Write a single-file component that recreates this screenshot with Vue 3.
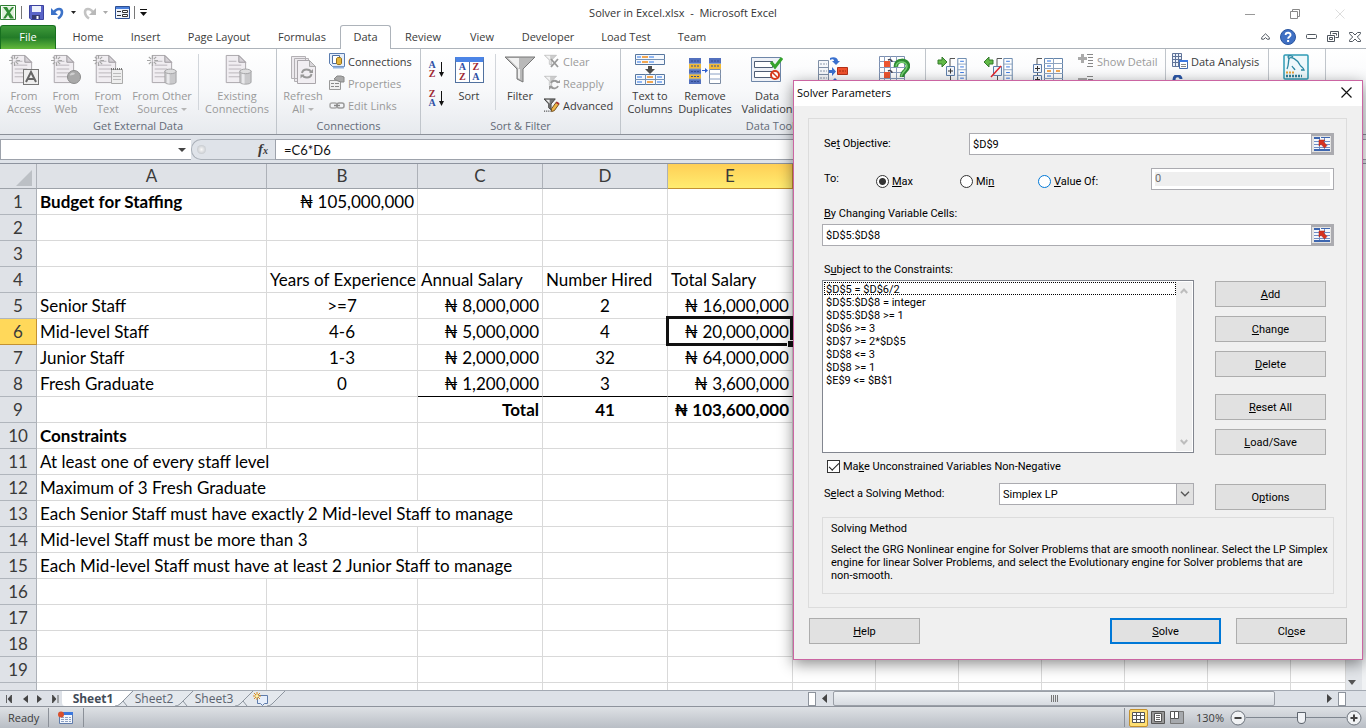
<script setup>
import { ref } from 'vue'

const tabs = [
  { name: 'Home', cls: 'w58' },
  { name: 'Insert', cls: 'w57' },
  { name: 'Page Layout', cls: 'w90' },
  { name: 'Formulas', cls: 'w76' },
  { name: 'Data', cls: 'active' },
  { name: 'Review', cls: 'w64' },
  { name: 'View', cls: 'w54' },
  { name: 'Developer', cls: 'w78' },
  { name: 'Load Test', cls: 'w78' },
  { name: 'Team', cls: 'w54' },
]

const columns = ['A', 'B', 'C', 'D', 'E', '', '', '', '', '', '', '']

const N = '₦'
const content = {
  1: [{ t: 'Budget for Staffing', c: 'bold' }, { t: `${N} 105,000,000`, c: 'right' }],
  4: [{}, { t: 'Years of Experience' }, { t: 'Annual Salary' }, { t: 'Number Hired' }, { t: 'Total Salary' }],
  5: [{ t: 'Senior Staff' }, { t: '>=7', c: 'mid' }, { t: `${N} 8,000,000`, c: 'right' }, { t: '2', c: 'mid' }, { t: `${N} 16,000,000`, c: 'right' }],
  6: [{ t: 'Mid-level Staff' }, { t: '4-6', c: 'mid' }, { t: `${N} 5,000,000`, c: 'right' }, { t: '4', c: 'mid' }, { t: `${N} 20,000,000`, c: 'right selected' }],
  7: [{ t: 'Junior Staff' }, { t: '1-3', c: 'mid' }, { t: `${N} 2,000,000`, c: 'right' }, { t: '32', c: 'mid' }, { t: `${N} 64,000,000`, c: 'right' }],
  8: [{ t: 'Fresh Graduate' }, { t: '0', c: 'mid' }, { t: `${N} 1,200,000`, c: 'right rule' }, { t: '3', c: 'mid rule' }, { t: `${N} 3,600,000`, c: 'right rule' }],
  9: [{}, {}, { t: 'Total', c: 'right bold' }, { t: '41', c: 'mid bold' }, { t: `${N} 103,600,000`, c: 'right bold' }],
  10: [{ t: 'Constraints', c: 'bold' }],
  11: [{ t: 'At least one of every staff level', span: 2 }],
  12: [{ t: 'Maximum of 3 Fresh Graduate', span: 2 }],
  13: [{ t: 'Each Senior Staff must have exactly 2 Mid-level Staff to manage', span: 3 }],
  14: [{ t: 'Mid-level Staff must be more than 3', span: 2 }],
  15: [{ t: 'Each Mid-level Staff must have at least 2 Junior Staff to manage', span: 3 }],
}
const rows = Array.from({ length: 20 }, (_, i) => {
  const cells = [...(content[i + 1] || [])]
  let used = cells.reduce((n, c) => n + (c.span || 1), 0)
  while (used < columns.length) {
    cells.push({})
    used++
  }
  return { n: i + 1, cells }
})

const constraints = ['$D$5 = $D$6/2', '$D$5:$D$8 = integer', '$D$5:$D$8 >= 1', '$D$6 >= 3', '$D$7 >= 2*$D$5', '$D$8 <= 3', '$D$8 >= 1', '$E$9 <= $B$1']

const objective = ref('$D$9')
const variables = ref('$D$5:$D$8')
const target = ref('max')
const targetValue = ref('0')
const nonNegative = ref(true)
const formula = ref('=C6*D6')
</script>

<template>
  <div class="app">
    <svg class="defs" aria-hidden="true">
      <symbol id="doc" viewBox="0 0 32 32">
        <path d="M8.500 1.500h13l7 7v21h-20z" fill="#f0edf1" stroke="#aaa6ab" />
        <path d="M21.500 1.500v7h7z" fill="#d5d1d6" stroke="#9b979c" />
        <path d="M11 7.500h8M11 11.500h13M11 15.500h13M11 19.500h13M11 23.500h13" stroke="#b9b5ba" />
      </symbol>
      <symbol id="spark" viewBox="0 0 12 12">
        <path d="M6 0v4M6 8v4M0 6h4M8 6h4M2 2l2.500 2.500M7.500 7.500L10 10M10 2L7.500 4.500M4.500 7.500L2 10" stroke="#a5a5a5" stroke-width="1.300" />
      </symbol>
      <symbol id="cyl" viewBox="0 0 14 18">
        <path d="M1 3v12c0 3 12 3 12 0V3z" fill="#c9c9cb" stroke="#a0a0a2" />
        <path d="M3 5v11c1 .6 2 .8 3 .9V5z" fill="#e9e9eb" />
        <ellipse cx="7" cy="3.500" rx="6" ry="2.500" fill="#dededf" stroke="#a0a0a2" />
      </symbol>
      <symbol id="funnel" viewBox="0 0 32 32">
        <path d="M1 3h30L19 15v13l-6-3V15z" fill="#b9b9b9" stroke="#777" />
        <path d="M4 4h11v11z" fill="#f1f1f1" />
        <path d="M14 15h2v10l-2-1z" fill="#eee" />
      </symbol>
      <symbol id="refbtn" viewBox="0 0 16 14">
        <path d="M0 0h16v14H0z" fill="#f4f7fc" />
        <path d="M0 4.500h16M0 7.500h16M0 10.500h16M5.500 0v14M10.500 0v14" stroke="#6f8dc4" />
        <path d="M0 0h6v2H0zM7 0h9v1H7zM0 12h16v2H0z" fill="#3d66b0" />
        <path d="M5 3h6L9.500 4.800l3.500 3.700-2.500 2.500L7 7.300 5 9z" fill="#d8321f" stroke="#a9261a" stroke-width=".5" />
      </symbol>
      <symbol id="rows" viewBox="0 0 10 32">
        <path d="M.5.500h9v31h-9z" fill="#fff" stroke="#6484ab" />
        <path d="M0 6.500h10M0 12.500h10M0 18.500h10M0 24.500h10" stroke="#8ea4c0" />
        <path d="M3 3.500h4M3 9.500h4M3 15.500h4M3 21.500h4M3 28h4" stroke="#2f72e0" />
      </symbol>
    </svg>

    <header class="titlebar">
      <div class="quick">
        <svg width="17" height="17" viewBox="0 0 17 17"><path d="M.5 1.500h15v14H.5z" fill="#fff" stroke="#2f7d34" /><path d="M2 2.500h12v12H2z" fill="#dff0dc" /><path d="M3 3h4l2 3.500L12 3h2l-4 5.500 4 6h-4l-2-3.500-2.500 3.500H3l4-6z" fill="#318c35" /></svg>
        <span class="bar"></span>
        <button class="plain" aria-label="Save"><svg width="15" height="15" viewBox="0 0 15 15"><path d="M.5.500h14v14H2l-1.500-1.500z" fill="#5964c8" stroke="#3c429e" /><path d="M3 1h9v6H3z" fill="#edf1fb" /><path d="M3 10h8v4H3z" fill="#353b72" /><path d="M7.500 11h2v3h-2z" fill="#fff" /></svg></button>
        <button class="plain" aria-label="Undo"><svg width="13" height="14" viewBox="0 0 13 14"><path d="M3 6c3-4 8-4 8 0 0 3-1.500 5-4 6.500" fill="none" stroke="#3c72c8" stroke-width="2.600" /><path d="M0 2v7h7z" fill="#3c72c8" /></svg></button>
        <svg class="caret" width="5" height="3" viewBox="0 0 5 3"><path d="M0 0h5L2.500 3z" fill="#222" /></svg>
        <button class="plain" aria-label="Redo"><svg width="13" height="14" viewBox="0 0 13 14"><path d="M10 6c-3-4-8-4-8 0 0 3 1.500 5 4 6.500" fill="none" stroke="#c3c3c3" stroke-width="2.600" /><path d="M13 2v7H6z" fill="#b9b9b9" /></svg></button>
        <svg class="caret" width="5" height="3" viewBox="0 0 5 3"><path d="M0 0h5L2.500 3z" fill="#aaa" /></svg>
        <button class="plain" aria-label="Form"><svg width="15" height="13" viewBox="0 0 15 13"><path d="M.5.500h14v12H.5z" fill="#eef3fb" stroke="#2d4f91" /><path d="M1 1h13v2H1z" fill="#4a7fdc" /><path d="M2 5.500h4M2 9.500h4" stroke="#333" /><path d="M7.500 4.500h5v2h-5zM7.500 8.500h5v2h-5z" fill="#fff" stroke="#333" /></svg></button>
        <span class="bar"></span>
        <svg width="7" height="7" viewBox="0 0 7 7"><path d="M0 .5h7" stroke="#111" /><path d="M0 3h7L3.500 7z" fill="#111" /></svg>
      </div>
      <h1>Solver in Excel.xlsx&nbsp; -&nbsp; Microsoft Excel</h1>
      <div class="winbtns">
        <button class="plain" aria-label="Minimize"><svg width="11" height="11" viewBox="0 0 11 11"><path d="M0 5.500h10" stroke="#999" /></svg></button>
        <button class="plain" aria-label="Restore"><svg width="11" height="11" viewBox="0 0 11 11"><path d="M.5 2.500h7v7h-7zM2.500 2.500v-2h7v7h-2" fill="none" stroke="#888" /></svg></button>
        <button class="plain" aria-label="Close window"><svg width="11" height="11" viewBox="0 0 11 11"><path d="M.5.500l9 9M9.500.5l-9 9" stroke="#ddd" /></svg></button>
      </div>
    </header>

    <nav class="tabs">
      <button class="file">File</button>
      <button v-for="t in tabs" :key="t.name" class="tab" :class="t.cls">{{ t.name }}</button>
      <div class="helpers">
        <svg width="9" height="7" viewBox="0 0 9 7"><path d="M.7 4.500L4.500.8l3.800 3.700v1.700H6.200L4.500 4.600 2.800 6.200H.7z" fill="#fff" stroke="#4f565f" /></svg>
        <svg width="16" height="16" viewBox="0 0 16 16"><circle cx="8" cy="8" r="7.500" fill="#3f70c4" stroke="#2a559f" /><path d="M5.600 6c0-3 5-3 5 0 0 1.800-2.500 1.800-2.500 3.800" fill="none" stroke="#fff" stroke-width="1.800" /><path d="M7.100 11h2v2h-2z" fill="#fff" /></svg>
        <svg width="11" height="5" viewBox="0 0 11 5"><rect x=".5" y=".5" width="10" height="4" rx="1" fill="#fff" stroke="#4f565f" /></svg>
        <svg width="12" height="11" viewBox="0 0 12 11"><path d="M3.500 3.500v-3h8v6h-3" fill="none" stroke="#4f565f" /><path d="M.5 4.500h7v6h-7z M2.500 6.500h3v2h-3zM5.500 2.500h4v2" fill="none" stroke="#4f565f" /></svg>
        <svg width="12" height="10" viewBox="0 0 12 10"><path d="M.5.500h3L6 3 8.500.5h3v1.200L8.300 5l3.200 3.200v1.300h-3L6 7 3.500 9.500h-3V8.200L3.700 5 .5 1.700z" fill="#fff" stroke="#4f565f" /></svg>
      </div>
    </nav>

    <section class="ribbon">
      <div class="group g-ext">
        <div class="tools">
          <button class="big b42 off"><svg width="32" height="32" viewBox="0 0 32 32"><use href="#doc" x="-4" y="0" width="31" height="31" /><use href="#spark" x="1" y="1" width="11" height="11" /><rect x="15.500" y="15.500" width="15" height="15" fill="#eee" stroke="#777" /><path d="M18 28l5-10 5 10M20 25h6" fill="none" stroke="#666" stroke-width="2" /></svg>From<br>Access</button>
          <button class="big b42 off"><svg width="32" height="32" viewBox="0 0 32 32"><use href="#doc" x="-4" y="0" width="31" height="31" /><use href="#spark" x="1" y="1" width="11" height="11" /><circle cx="24" cy="23" r="6.500" fill="#a9a9a9" stroke="#8c8c8c" /><path d="M19.500 21c1.500-3 4-3 5-2s-1 2-2 2-2 1-3 0z" fill="#cfcfcf" /></svg>From<br>Web</button>
          <button class="big b42 off"><svg width="32" height="32" viewBox="0 0 32 32"><use href="#doc" x="-4" y="0" width="31" height="31" /><use href="#spark" x="1" y="1" width="11" height="11" /><path d="M19.500 15.500h11v14h-11z" fill="#eee" stroke="#aaa" /><path d="M19 15h12" stroke="#777" stroke-width="2" stroke-dasharray="1 1" /><path d="M21 19.500h8M21 22.500h8M21 25.500h8" stroke="#bbb" /></svg>From<br>Text</button>
          <button class="big b66 off"><svg width="32" height="32" viewBox="0 0 32 32"><use href="#doc" x="-2" y="0" width="31" height="31" /><use href="#spark" x="1" y="1" width="11" height="11" /><use href="#cyl" x="18" y="14" width="13" height="17" /></svg>From Other<br>Sources <i class="dd"></i></button>
          <span class="sep"></span>
          <button class="big b70 off"><svg width="32" height="32" viewBox="0 0 32 32"><use href="#doc" x="-3" y="0" width="31" height="31" /><use href="#cyl" x="18" y="14" width="13" height="17" /></svg>Existing<br>Connections</button>
        </div>
        <div class="caption">Get External Data</div>
      </div>

      <div class="group g-con">
        <div class="tools">
          <button class="big b46 off"><svg width="32" height="32" viewBox="0 0 32 32"><path d="M4.500 2.500h14v22h-14zM7.500 4.500h14v23h-14z" fill="#ece9ed" stroke="#b3b0b4" /><path d="M10.500 6.500h12l6 6v17h-18z" fill="#f1eef2" stroke="#aaa6ab" /><path d="M22.500 6.500v6h6z" fill="#d9d6da" stroke="#aaa" /><path d="M15 19c1-5 8-4 9-1M24.500 20c-1 5-8 4-9 1" fill="none" stroke="#999" stroke-width="2" /><path d="M22 19h4v-4zM17.500 20.500h-4v4z" fill="#999" /></svg>Refresh<br>All <i class="dd"></i></button>
          <div class="smalls">
            <button class="small"><svg width="16" height="16" viewBox="0 0 16 16"><path d="M.5.500h15v13H3.500l-3-3z" fill="#e5eefb" stroke="#5a7caf" /><path d="M3.500 2.500h7v8h-7z" fill="#fff" stroke="#4d6ea2" /><path d="M7.500 5.500c0-1.500 5-1.500 5 0v5c0 1.500-5 1.500-5 0z" fill="#e5b53a" stroke="#94701e" /><path d="M4 14.500h11" stroke="#8fb1e0" stroke-width="2" /></svg>Connections</button>
            <button class="small off"><svg width="16" height="16" viewBox="0 0 16 16"><path d="M.5 5.500h11v9H.5z" fill="#efefef" stroke="#999" /><path d="M2 8.500h3M6 8.500h4M2 11.500h3M6 11.500h4" stroke="#888" /><path d="M5 4l3-3h4l3 1v5h-3L9 6z" fill="#aaa" stroke="#888" /></svg>Properties</button>
            <button class="small off"><svg width="16" height="16" viewBox="0 0 16 16"><rect x="1" y="6" width="7" height="5" rx="2" fill="none" stroke="#aaa" stroke-width="1.500" /><rect x="8" y="6" width="7" height="5" rx="2" fill="none" stroke="#999" stroke-width="1.500" /><path d="M5 8.500h6" stroke="#888" stroke-width="1.500" /></svg>Edit Links</button>
          </div>
        </div>
        <div class="caption">Connections</div>
      </div>

      <div class="group g-sort">
        <div class="tools">
          <div class="azcol">
            <button class="plain az" aria-label="Sort A to Z"><span class="letters"><b class="a">A</b><b class="z">Z</b></span><svg width="5" height="15" viewBox="0 0 5 15"><path d="M2.500 0v12" stroke="#111" /><path d="M0 10h5l-2.500 5z" fill="#111" /></svg></button>
            <button class="plain az" aria-label="Sort Z to A"><span class="letters"><b class="z">Z</b><b class="a">A</b></span><svg width="5" height="15" viewBox="0 0 5 15"><path d="M2.500 0v12" stroke="#111" /><path d="M0 10h5l-2.500 5z" fill="#111" /></svg></button>
          </div>
          <button class="big single b46"><span class="sorticon"><b class="a">A</b><b class="z">Z</b><b class="z">Z</b><b class="a">A</b></span>Sort</button>
          <span class="sep"></span>
          <button class="big single b42"><svg width="32" height="32" viewBox="0 0 32 32"><use href="#funnel" width="32" height="32" /></svg>Filter</button>
          <div class="smalls">
            <button class="small off"><svg width="16" height="16" viewBox="0 0 16 16"><use href="#funnel" x="0" y="1" width="13" height="13" opacity=".7" /><path d="M7 6l7 8M14 6l-7 8" stroke="#999" stroke-width="1.800" /></svg>Clear</button>
            <button class="small off"><svg width="16" height="16" viewBox="0 0 16 16"><use href="#funnel" x="0" y="0" width="13" height="13" opacity=".7" /><path d="M7 8c1-3 6-3 7 0M14 11c-1 3-5 3-7 1" fill="none" stroke="#999" stroke-width="1.800" /><path d="M12 8h4V5zM9 11H5v4z" fill="#999" /></svg>Reapply</button>
            <button class="small"><svg width="16" height="16" viewBox="0 0 17 16"><path d="M0 1.500h12L7.500 7v6l-2.500-2V7z" fill="#777" stroke="#444" /><path d="M2 2.500h4v4z" fill="#eee" /><path d="M8 12l5-7 3 2-5 7-3 1z" fill="#eeb447" stroke="#6b4a1c" /><path d="M13 5l3 2" stroke="#a33" stroke-width="2" /><path d="M0 14.500h8" stroke="#111" stroke-dasharray="1 1" /></svg>Advanced</button>
          </div>
        </div>
        <div class="caption">Sort &amp; Filter</div>
      </div>

      <div class="group g-data">
        <div class="tools">
          <button class="big b52"><svg width="32" height="32" viewBox="0 0 32 32"><path d="M1.500.5h29v10h-29zM1.500 20.500h29v10h-29z" fill="#f5f8fd" stroke="#57779f" /><path d="M1 5.500h30M1 25.500h30M11.500 20v11M21.500 20v11" stroke="#7592b4" /><path d="M3 3h4M15 3h5M3 8h4M15 8h5M3 23h5M23 23h5M3 28h5M23 28h5" stroke="#2d76e8" /><path d="M8 3h6M8 8h6M13 23h6M13 28h6" stroke="#f08b19" stroke-width="1.500" /><path d="M14 12h4v3h3l-5 5-5-5h3z" fill="#4d4d4d" /></svg>Text to<br>Columns</button>
          <button class="big b58"><svg width="34" height="32" viewBox="0 0 34 32"><path d="M1 4h12v26H1zM21 4h12v5H21z" fill="#5370bd" /><path d="M1 10h12v5H1zM1 20h12v5H1zM21 10h12v5H21z" fill="#f1ba35" /><path d="M21.500 15.500h11v14h-11z" fill="#fff" stroke="#7b8ba2" /><path d="M21 20h12M21 25h12M1 9.500h12M1 15h12M1 20h12M1 25h12M21 9.500h12" stroke="#8aa0c4" /><path d="M3 7h8M3 12h8M3 17.500h8M3 22.500h8M3 27.500h8M23 7h8M23 12h8" stroke="#334c93" stroke-dasharray="2 1" /><path d="M14 16.500h4" stroke="#2c5ed0" /><path d="M17 14v5l3-2.500z" fill="#2c5ed0" /></svg>Remove<br>Duplicates</button>
          <button class="big b66"><svg width="32" height="32" viewBox="0 0 32 32"><path d="M.5 3.500h29v24H.5z" fill="#eef1f7" stroke="#6e86a8" /><path d="M3.500 7.500h18v6h-18zM3.500 17.500h18v6h-18z" fill="#fff" stroke="#4f5d75" /><path d="M20 8l4 5 7-9" fill="none" stroke="#35a32d" stroke-width="3" /><circle cx="24" cy="21" r="4" fill="#fff" stroke="#d5381b" stroke-width="2" /><path d="M21 18l6 6" stroke="#d5381b" stroke-width="1.500" /></svg>Data<br>Validation</button>
          <button class="big bare b66" aria-label="Consolidate"><svg width="32" height="32" viewBox="0 0 32 32"><path d="M1.500 4.500h10v24h-10z" fill="#f5f7fa" stroke="#7f8fa6" /><path d="M1 11.500h11M1 18.500h11" stroke="#7f8fa6" /><path d="M3 8h7M3 15h7M3 22h7" stroke="#8d9aac" stroke-dasharray="2 1" /><path d="M20.500 11.500h10v7h-10z" fill="#f0512d" stroke="#b43118" /><path d="M22 15h7" stroke="#a6300f" stroke-dasharray="2 1" /><path d="M12 14h3v-3l4 4.500-4 4.500v-3h-3zM13 2c4-2 8 0 8 3h2l-4 4-4-4h2c0-2-2-2-4-1zM14 26l4-4 4 4z" fill="#3a70cf" /></svg></button>
          <button class="big bare b56" aria-label="What-If Analysis"><svg width="32" height="32" viewBox="0 0 32 32"><path d="M1.500.5h25v28h-25z" fill="#fff" stroke="#7c8fb0" /><path d="M1 5.500h26M1 11.500h26M1 16.500h26M1 22.500h26M6.500 0v29M12.500 0v29M18.500 0v29" stroke="#8a9dbd" /><path d="M6 5h6v6H6zM6 16h6v6H6z" fill="#ec5530" /><path d="M10 4c2-1 4 0 4 2M10 15c2-1 4 0 4 2" stroke="#445" stroke-width="1.500" fill="none" /><path d="M18 11c-1-8 12-8 12-1 0 5-6 5-6 11" fill="none" stroke="#2d8b32" stroke-width="4.500" /><path d="M18 10.500c0-6 11-6 11 0 0 4-5 5-6 10" fill="none" stroke="#75cf73" stroke-width="1.500" /><circle cx="23" cy="27" r="3" fill="#49a64a" /></svg></button>
        </div>
        <div class="caption">Data Tools</div>
      </div>

      <div class="group g-out">
        <div class="tools">
          <button class="big bare b46" aria-label="Group"><svg width="32" height="32" viewBox="0 0 32 32"><path d="M2 4h4V1l5 5-5 5V8H2z" fill="#62b947" stroke="#347a2c" /><path d="M19 2.500h-5V11M14.500 18v10" fill="none" stroke="#555" /><path d="M10.500 10.500h8v9h-8z" fill="#f3f6fb" stroke="#5f7fac" /><path d="M12 15h5M14.500 12.500v5" stroke="#333" /><use href="#rows" x="21" y="2" width="10" height="30" /></svg></button>
          <button class="big bare b46" aria-label="Ungroup"><svg width="32" height="32" viewBox="0 0 32 32"><path d="M11 4H7V1L2 6l5 5V8h4z" fill="#62b947" stroke="#347a2c" /><path d="M20 2.500h-5V11M15.500 18v10" fill="none" stroke="#555" /><path d="M11.500 10.500h8v9h-8z" fill="#f3f6fb" stroke="#5f7fac" /><path d="M9 21l10-11" stroke="#e5222a" stroke-width="1.500" /><use href="#rows" x="21" y="2" width="10" height="30" /></svg></button>
          <button class="big bare b54" aria-label="Subtotal"><svg width="32" height="32" viewBox="0 0 32 32"><path d="M10 2.500H5V8M5.500 16v14" fill="none" stroke="#555" /><path d="M1.500 8.500h8v8h-8zM1.500 19.500h8v8h-8z" fill="#f3f6fb" stroke="#5f7fac" /><path d="M3 12.500h5M5.500 10v5M3 23.500h5M5.500 21v5" stroke="#333" /><path d="M12.500 2.500h18v29h-18z" fill="#fff" stroke="#6484ab" /><path d="M12 7.500h19M12 12.500h19M12 17.500h19M12 22.500h19M21.500 2v30" stroke="#8ea4c0" /><path d="M15 5h4M15 10h4M15 20h4" stroke="#2f72e0" /><path d="M24 15h4M15 15h4M15 25h4M24 25h4" stroke="#f08b19" stroke-width="1.500" /></svg></button>
          <div class="smalls">
            <button class="small off"><svg width="16" height="16" viewBox="0 0 16 16"><path d="M3 1h3v3h3v3H6v3H3V7H0V4h3z" fill="#aaa" /><path d="M9 1.500h6M10 4.500h5M10 7.500h5M10 10.500h5M9 13.500h6" stroke="#888" /></svg>Show Detail</button>
            <button class="small off" aria-label="Hide Detail"><svg width="16" height="16" viewBox="0 0 16 16"><path d="M0 3h9v3H0z" fill="#aaa" /><path d="M9 1.500h6M10 4.500h5M10 7.500h5" stroke="#888" /></svg></button>
          </div>
        </div>
      </div>

      <div class="group g-ana">
        <div class="tools">
          <div class="smalls">
            <button class="small"><svg width="16" height="16" viewBox="0 0 16 16"><path d="M.5.500h9v13h-9z" fill="#edf2fa" stroke="#5f7399" /><path d="M0 3.500h10M0 6.500h10M0 9.500h10M3.500 0v14M6.500 0v14" stroke="#5f7399" /><path d="M7.500 7.500h8v8h-8z" fill="#fff" stroke="#466bab" /><path d="M7 8h9" stroke="#3d78df" stroke-width="2" /><path d="M9 11.500h5M9 13.500h5" stroke="#888" /></svg>Data Analysis</button>
            <button class="small" aria-label="Solver"><svg width="16" height="16" viewBox="0 0 16 16"><path d="M2 14V5c0-6 7-5 7-1" fill="none" stroke="#2c57a8" stroke-width="3" /></svg></button>
          </div>
        </div>
      </div>

      <div class="group g-sql">
        <div class="tools">
          <button class="big logo b48" aria-label="MySQL for Excel"><svg width="26" height="26" viewBox="0 0 26 26"><rect x="1" y="1" width="24" height="24" rx="1" fill="#eef8fb" stroke="#2f9ab5" stroke-width="1.500" /><path d="M4 15c2-4 1-7 2-10 1-4 9 1 11 6 1 2 3 2 4 5h-3M6 5c-3-4 2-4 4-2M9 12c1 2 2 2 3 4" fill="none" stroke="#2b87a3" stroke-width="1.300" /><path d="M3 18.500h8" stroke="#e5a23a" stroke-width="2" stroke-dasharray="2 1" /><path d="M3 22h16" stroke="#317f98" stroke-width="2.500" stroke-dasharray="2 1" /></svg></button>
        </div>
      </div>
    </section>

    <div class="formulabar">
      <div class="namebox"><input aria-label="Name box"><i class="nbcaret"></i></div>
      <div class="fx"><i class="knob"></i><span>f<small>x</small></span></div>
      <input v-model="formula" class="formula" aria-label="Formula">
    </div>

    <main class="sheet">
      <div class="gridwrap">
        <table>
          <colgroup>
            <col class="c-h"><col class="c-a"><col class="c-b"><col class="c-c"><col class="c-c"><col class="c-c"><col v-for="k in 6" :key="k" class="c-n"><col>
          </colgroup>
          <thead>
            <tr>
              <th class="corner"><i></i></th>
              <th v-for="(c, i) in columns" :key="i" :class="{ hot: c === 'E' }">{{ c }}</th>
            </tr>
          </thead>
          <tbody>
            <tr v-for="r in rows" :key="r.n">
              <th :class="{ hot: r.n === 6 }">{{ r.n < 20 ? r.n : '' }}</th>
              <td v-for="(c, i) in r.cells" :key="i" :colspan="c.span || 1" :class="c.c">{{ c.t }}</td>
            </tr>
          </tbody>
        </table>
      </div>
      <div class="vscroll"><i></i></div>
    </main>

    <div class="sheetbar">
      <div class="sheetnav">
        <svg width="8" height="8" viewBox="0 0 8 8"><path d="M.5 0v8M2 4l3.500-4v8z" fill="#444" stroke="#444" stroke-width=".8" /></svg>
        <svg width="5" height="8" viewBox="0 0 5 8"><path d="M5 0v8L0 4z" fill="#444" /></svg>
        <svg width="5" height="8" viewBox="0 0 5 8"><path d="M0 0v8l5-4z" fill="#444" /></svg>
        <svg width="8" height="8" viewBox="0 0 8 8"><path d="M7 0v8M5 4L1.500 0v8z" fill="#444" stroke="#444" stroke-width=".8" /></svg>
      </div>
      <div class="sheettabs">
        <svg class="tabshape" width="224" height="15" viewBox="0 0 224 15">
          <path d="M118 15L132 0H192L178 15zM58 15L71 0H131L118 15zM178 15L191 0H223L209 15z" fill="#e4e8ed" />
          <path d="M0 0h70L58 13q-2 2-5 2H3q-3 0-3-4z" fill="#fff" />
          <path d="M71 0L58 13q-2 2-5 2M131 0L118 13q-2 2-5 2M191 0L178 13q-2 2-5 2M223 0L210 13q-2 2-5 2M61 10l4 5M121 10l4 5M181 10l4 5" fill="none" stroke="#8d959f" />
        </svg>
        <button class="stab on">Sheet1</button>
        <button class="stab">Sheet2</button>
        <button class="stab">Sheet3</button>
        <button class="plain newtab" aria-label="Insert worksheet"><svg width="16" height="14" viewBox="0 0 16 14"><path d="M4.500 3.500h10v8h-3l-2 2-2-2h-3z" fill="#e6eefb" stroke="#5e7cac" /><path d="M4 0v8M0 4h8M1 1l6 6M7 1L1 7" stroke="#d98b1c" /><circle cx="4" cy="4" r="1.500" fill="#fff3a0" /></svg></button>
      </div>
      <div class="hscroll">
        <i class="split"></i>
        <svg width="5" height="9" viewBox="0 0 5 9"><path d="M5 0v9L0 4.500z" fill="#444" /></svg>
        <div class="track"><div class="thumb"><i></i><i></i><i></i><i></i></div></div>
        <svg width="5" height="9" viewBox="0 0 5 9"><path d="M0 0v9l5-4.500z" fill="#444" /></svg>
        <i class="split"></i>
      </div>
    </div>

    <footer class="status">
      <span class="ready">Ready</span>
      <span class="ssep"></span>
      <svg class="macro" width="16" height="14" viewBox="0 0 16 14"><path d="M1.500 1.500h13v11h-13z" fill="#f4f7fc" stroke="#5f7bab" /><path d="M2 2.500h13" stroke="#3b77de" stroke-width="3" /><path d="M3 6.500h10M3 8.500h10M3 10.500h10" stroke="#8ba0c4" stroke-dasharray="3 1" /><circle cx="3" cy="3.500" r="3" fill="#d9502d" /></svg>
      <span class="ssep"></span>
      <span class="fill"></span>
      <span class="ssep"></span>
      <button class="plain view on" aria-label="Normal view"><svg width="13" height="11" viewBox="0 0 13 11"><path d="M.5.500h12v10H.5zM0 3.500h13M0 7.500h13M4.500 0v11M8.500 0v11" fill="#fff" stroke="#555" /></svg></button>
      <button class="plain view" aria-label="Page layout view"><svg width="14" height="13" viewBox="0 0 14 13"><path d="M.5.500h13v12H.5z" fill="#999" stroke="#555" /><path d="M3.500 2.500h7v8h-7z" fill="#fff" stroke="#555" /><path d="M5 4.500h4M5 6.500h4M5 8.500h4" stroke="#666" /></svg></button>
      <button class="plain view" aria-label="Page break view"><svg width="14" height="13" viewBox="0 0 14 13"><path d="M.5.500h13v12H.5z" fill="#a6a9ad" stroke="#777" /><path d="M.5.500h4v7h-4zM4.500.500h4v7h-4z" fill="#fff" stroke="#555" /></svg></button>
      <span class="zoomtext">130%</span>
      <button class="plain" aria-label="Zoom out"><svg width="16" height="16" viewBox="0 0 16 16"><circle cx="8" cy="8" r="7" fill="#f0f2f4" stroke="#6b727b" /><path d="M4.500 8h7" stroke="#444" stroke-width="2" /></svg></button>
      <div class="slider"><i class="handle"></i></div>
      <button class="plain" aria-label="Zoom in"><svg width="16" height="16" viewBox="0 0 16 16"><circle cx="8" cy="8" r="7" fill="#f0f2f4" stroke="#6b727b" /><path d="M4.500 8h7M8 4.500v7" stroke="#444" stroke-width="2" /></svg></button>
    </footer>

    <div class="dialog" role="dialog" aria-label="Solver Parameters">
      <div class="dtitle">
        <span>Solver Parameters</span>
        <button class="plain" aria-label="Close dialog"><svg width="11" height="11" viewBox="0 0 11 11"><path d="M.5.500l10 10M10.500.5l-10 10" stroke="#111" stroke-width="1.200" /></svg></button>
      </div>
      <div class="panel">
        <div class="line objective">
          <label for="obj">Se<u>t</u> Objective:</label>
          <div class="field"><input id="obj" v-model="objective"><button aria-label="Pick objective cell"><svg width="16" height="14"><use href="#refbtn" width="16" height="14" /></svg></button></div>
        </div>
        <div class="line to">
          <span class="tolabel">To:</span>
          <label class="radio r1"><input v-model="target" type="radio" value="max"><span><u>M</u>ax</span></label>
          <label class="radio r2"><input v-model="target" type="radio" value="min"><span>Mi<u>n</u></span></label>
          <label class="radio r3"><input v-model="target" type="radio" value="value" class="focus"><span><u>V</u>alue Of:</span></label>
          <input v-model="targetValue" class="valueof" disabled aria-label="Target value">
        </div>
        <label class="heading" for="vars"><u>B</u>y Changing Variable Cells:</label>
        <div class="field"><input id="vars" v-model="variables"><button aria-label="Pick variable cells"><svg width="16" height="14"><use href="#refbtn" width="16" height="14" /></svg></button></div>
        <div id="sub" class="heading">S<u>u</u>bject to the Constraints:</div>
        <div class="block">
          <div class="left">
            <div class="listbox">
              <ul role="listbox" aria-labelledby="sub">
                <li v-for="(c, i) in constraints" :key="i" role="option" :class="{ focused: i === 0 }">{{ c }}</li>
              </ul>
              <div class="lscroll">
                <svg width="8" height="6" viewBox="0 0 8 6"><path d="M.8 5L4 1.500 7.200 5" fill="none" stroke="#bdbdbd" stroke-width="2" /></svg>
                <svg width="8" height="6" viewBox="0 0 8 6"><path d="M.8 1L4 4.500 7.200 1" fill="none" stroke="#bdbdbd" stroke-width="2" /></svg>
              </div>
            </div>
            <label class="check"><input v-model="nonNegative" type="checkbox"><span>Ma<u>k</u>e Unconstrained Variables Non-Negative</span></label>
            <div class="method">
              <label for="method">S<u>e</u>lect a Solving Method:</label>
              <div class="combo">
                <select id="method"><option>Simplex LP</option><option>GRG Nonlinear</option><option>Evolutionary</option></select>
                <span class="drop"><svg width="10" height="6" viewBox="0 0 10 6"><path d="M1 .8l4 4 4-4" fill="none" stroke="#555" stroke-width="1.300" /></svg></span>
              </div>
            </div>
          </div>
          <div class="side">
            <button class="btn"><span><u>A</u>dd</span></button>
            <button class="btn"><span><u>C</u>hange</span></button>
            <button class="btn"><span><u>D</u>elete</span></button>
            <button class="btn reset"><span><u>R</u>eset All</span></button>
            <button class="btn"><span><u>L</u>oad/Save</span></button>
            <button class="btn options"><span>O<u>p</u>tions</span></button>
          </div>
        </div>
        <section class="info">
          <h2>Solving Method</h2>
          <p>Select the GRG Nonlinear engine for Solver Problems that are smooth nonlinear. Select the LP Simplex engine for linear Solver Problems, and select the Evolutionary engine for Solver problems that are <span class="keep">non-smooth.</span></p>
        </section>
      </div>
      <div class="actions">
        <button class="btn"><span><u>H</u>elp</span></button>
        <span class="fill"></span>
        <button class="btn primary"><span><u>S</u>olve</span></button>
        <button class="btn"><span>Cl<u>o</u>se</span></button>
      </div>
    </div>
  </div>
</template>

<style>
body { margin: 0; overflow: hidden; }
</style>

<style scoped>
* { box-sizing: border-box; }
.app { position: relative; display: flex; flex-direction: column; width: 100%; height: 100vh; overflow: hidden; background: #fff; font: 11px/13px "Open Sans", "Noto Sans", sans-serif; color: #3b3b3b; }
.defs { position: absolute; width: 0; height: 0; }
svg { display: block; flex: none; }
button, input, select { font: inherit; color: inherit; margin: 0; }
button { padding: 0; border: 0; background: none; white-space: nowrap; }
.plain { display: block; flex: none; }
.fill { flex: 1; }
.keep { white-space: nowrap; }

.titlebar { display: grid; grid-template-columns: 1fr auto 1fr; align-items: center; height: 25px; flex: none; }
.quick { display: flex; align-items: center; gap: 7px; }
.quick > .bar { width: 1px; height: 13px; background: #777; margin-left: -3px; }
.quick .bar + svg { margin-left: -2px; }
h1 { margin: 0; font-size: 11px; font-weight: 400; line-height: 16px; color: #333; }
.winbtns { display: flex; justify-content: flex-end; gap: 34px; padding: 4px 20px 0 0; }

.tabs { display: flex; height: 24px; flex: none; border-bottom: 1px solid #adb3ba; }
.tab { height: 24px; padding-bottom: 2px; }
.file { width: 56px; height: 24px; margin-right: 3px; padding-bottom: 2px; border: 1px solid #17701f; border-bottom: 0; border-radius: 3px 3px 0 0; background: linear-gradient(#3f9a3a, #237c28 50%, #63b93b); color: #fff; }
.w54 { width: 54px; } .w57 { width: 57px; } .w58 { width: 58px; } .w64 { width: 64px; }
.w76 { width: 76px; } .w78 { width: 78px; } .w90 { width: 90px; }
.active { width: 51px; border: 1px solid #adb3ba; border-bottom: 0; border-radius: 3px 3px 0 0; background: #fff; }
.helpers { display: flex; align-items: center; gap: 10px; margin-left: auto; padding-right: 5px; }

.ribbon { display: flex; height: 86px; flex: none; background: linear-gradient(#fff, #f7f8fa 50%, #e7eaee); border-bottom: 1px solid #8b9098; overflow: hidden; }
.group { display: flex; flex-direction: column; flex: none; border-right: 1px solid #c0c5cb; }
.tools { display: flex; flex: 1; min-height: 0; padding: 5px 3px 0; }
.caption { height: 15px; flex: none; line-height: 14px; text-align: center; color: #646b78; }
.g-ext { width: 277px; } .g-con { width: 144px; } .g-sort { width: 200px; } .g-data { width: 305px; }
.g-out { width: 240px; } .g-ana { width: 103px; } .g-sql { width: 57px; }
.big { display: block; flex: none; height: 61px; text-align: center; }
.big svg { margin: 0 auto 3px; }
.single { height: 48px; }
.bare { height: 35px; }
.logo { height: 26px; }
.bare svg, .logo svg { margin-bottom: 0; }
.off { color: #9a9a9a; }
.b42 { width: 42px; } .b46 { width: 46px; } .b48 { width: 48px; } .b52 { width: 52px; } .b54 { width: 54px; }
.b56 { width: 56px; } .b58 { width: 58px; } .b66 { width: 66px; } .b70 { width: 70px; }
.sep { width: 1px; height: 56px; margin: 0 3px; background: #d2d6db; }
.dd { display: inline-block; border: 3px solid transparent; border-top-color: #b5b5b5; border-bottom: 0; vertical-align: 2px; }
.smalls { display: flex; flex-direction: column; margin: -4px 0 0 3px; }
.small { display: flex; align-items: center; gap: 3px; height: 22px; }
.azcol { display: flex; flex-direction: column; gap: 11px; padding: 6px 2px 0 4px; }
.az { display: flex; align-items: center; gap: 3px; }
.letters { display: block; width: 8px; }
.a, .z { display: block; font: bold 10px/9px "Liberation Serif", serif; text-align: center; }
.a { color: #2d4fa5; } .z { color: #9d2632; }
.sorticon { display: grid; grid-template-columns: 1fr 1fr; grid-template-rows: 10px 10px; width: 29px; height: 26px; margin: 3px auto 6px; border: 1px solid #51719f; border-top: 5px solid #4b84e6; background: linear-gradient(90deg, #fff 13px, #51719f 13px, #51719f 14px, #fff 14px); }
.sorticon .a, .sorticon .z { line-height: 10px; }

.formulabar { display: flex; height: 29px; flex: none; padding: 4px 0; background: #dfe3e9; border-bottom: 1px solid #8e949f; }
.namebox { display: flex; align-items: center; width: 191px; height: 21px; background: #fff; border: 1px solid #9da2ab; border-right: 0; }
.namebox input { flex: 1; min-width: 0; border: 0; outline: 0; background: none; }
.nbcaret { border: 4px solid transparent; border-top-color: #444; border-bottom: 0; margin-right: 5px; }
.fx { display: flex; align-items: center; justify-content: space-between; width: 84px; height: 21px; padding: 0 7px 0 5px; border: 1px solid #aab0b8; border-right: 0; border-radius: 10px 0 0 10px; background: #dfe3e9; font: italic bold 15px/18px "Liberation Serif", serif; }
.fx small { font-size: 10px; }
.knob { width: 9px; height: 9px; border-radius: 5px; background: radial-gradient(#f8f8f8, #b5bac0); }
.formula { flex: 1; min-width: 0; height: 21px; padding: 0 8px; border: 1px solid #9da2ab; border-right: 0; outline: 0; color: #111; font: 13px/19px Lato, sans-serif; background: #fff; }

.sheet { display: flex; flex: 1; min-height: 0; }
.gridwrap { flex: 1; min-width: 0; overflow: hidden; }
table { width: 100%; table-layout: fixed; border-collapse: separate; border-spacing: 0; font: 17px/25px Lato, "Noto Sans", sans-serif; color: #000; }
.c-h { width: 37px; } .c-a { width: 230px; } .c-b { width: 151px; } .c-c { width: 125px; } .c-n { width: 83px; }
td { height: 26px; padding: 0 3px; border-right: 1px solid #d9d9d9; border-bottom: 1px solid #d9d9d9; overflow: hidden; white-space: nowrap; }
th { height: 26px; padding: 0; font-weight: 400; background: #dfe2e7; border-right: 1px solid #adb1b8; border-bottom: 1px solid #b0b5bc; color: #3a3a3a; }
thead th { height: 25px; line-height: 24px; border-bottom-color: #9da2a9; }
.corner i { display: block; width: 0; height: 0; margin: 3px 4px 0 auto; border: 8px solid transparent; border-right-color: #bcc0c5; border-bottom-color: #bcc0c5; }
.hot { background: #ffd85a; border-color: #c39132; }
thead .hot { background: linear-gradient(#ffcf56, #ffec70); }
.right { text-align: right; } .mid { text-align: center; } .bold { font-weight: 700; }
.rule { border-bottom-color: #000; }
.selected { position: relative; overflow: visible; }
.selected::before { content: ""; position: absolute; inset: -3px -1px -2px -2px; border: 3px solid #111; }
.selected::after { content: ""; position: absolute; right: -2px; bottom: -3px; width: 6px; height: 6px; background: #111; border: solid #fff; border-width: 1px 0 0 1px; }
.vscroll { display: flex; align-items: flex-end; justify-content: center; width: 20px; padding: 0 4px 5px 0; background: #e3e6ea; border-right: 4px solid #f0f2f4; }
.vscroll i { border: 4px solid transparent; border-top: 5px solid #555; border-bottom: 0; }

.sheetbar { display: flex; height: 16px; flex: none; background: #dde1e7; border-top: 1px solid #a3a9b2; }
.sheetnav { display: flex; align-items: center; gap: 9px; width: 62px; padding-left: 6px; }
.sheettabs { position: relative; display: flex; flex: 1; align-items: center; }
.tabshape { position: absolute; left: 0; top: 0; }
.stab { position: relative; width: 60px; font-size: 12px; line-height: 15px; color: #5b6370; }
.stab.on { width: 62px; font-weight: 700; color: #444c58; }
.newtab { position: relative; margin-left: 9px; }
.hscroll { display: flex; align-items: center; width: 558px; gap: 6px; padding-right: 20px; }
.split { width: 8px; height: 14px; border: 1px solid #8d939c; background: #fff; }
.track { flex: 1; padding-right: 46px; }
.thumb { display: flex; align-items: center; justify-content: center; gap: 1px; height: 15px; border: 1px solid #9a9fa7; border-radius: 2px; background: linear-gradient(#f0f3f6, #d7dbe1); }
.thumb i { width: 1px; height: 7px; background: #777; }

.status { display: flex; align-items: center; height: 22px; flex: none; padding: 0 4px 0 8px; border-top: 1px solid #8e939c; background: linear-gradient(#dee1e5, #b9bec5); }
.ready { width: 40px; }
.ssep { width: 1px; height: 19px; background: #8b9098; }
.macro { margin: 0 9px; }
.view { display: flex; align-items: center; justify-content: center; width: 19px; height: 18px; }
.view.on { margin-left: 4px; border: 1px solid #c4902d; border-radius: 2px; background: #ffdf72; }
.zoomtext { width: 44px; padding-left: 4px; text-align: center; }
.slider { display: flex; align-items: center; justify-content: center; width: 100px; height: 14px; padding-left: 10px; background: linear-gradient(#7f868f, #7f868f) center / 100% 1px no-repeat; }
.handle { width: 9px; height: 12px; border: 1px solid #5e656e; border-radius: 1px 1px 5px 5px; background: #f0f2f5; }

.dialog { position: absolute; top: 80px; right: 3px; width: 570px; border: 1px solid #cb65a2; background: #f0f0f0; color: #000; font: 11px/13px Roboto, "Open Sans", sans-serif; box-shadow: 0 4px 14px rgba(0, 0, 0, .45); padding-bottom: 15px; }
.dtitle { display: flex; align-items: center; justify-content: space-between; height: 25px; padding: 0 10px 2px 3px; background: #fff; font-family: "Open Sans", sans-serif; }
.panel { margin: 12px 15px 0 14px; padding: 14px 12px 13px 13px; border: 1px solid #dcdcdc; }
.line { display: flex; }
.objective label { width: 147px; padding: 4px 0 0 2px; }
.field { display: flex; flex: 1; height: 22px; border: 1px solid #ababb0; background: #fff; }
.field input { flex: 1; min-width: 0; padding: 0 3px; border: 0; outline: 0; background: none; }
.field button { display: grid; place-items: center; width: 22px; border: 2px solid #ababb0; border-left-width: 1px; background: #e3e3e3; }
.to { margin-top: 13px; }
.tolabel { width: 54px; padding: 4px 0 0 2px; }
.radio { display: flex; align-items: center; gap: 3px; height: 26px; }
.r1 { width: 84px; } .r2 { width: 78px; } .r3 { flex: 1; }
.radio input { appearance: none; width: 13px; height: 13px; border: 1px solid #333; border-radius: 7px; background: #fff; }
.radio input:checked { background: radial-gradient(circle, #333 3px, #fff 4px); }
.radio .focus { border-color: #0078d7; }
.valueof { width: 183px; height: 22px; padding: 0 3px 2px; border: 1px solid #ababb0; background: #efefef; box-shadow: inset 0 0 0 3px #fff; color: #6d6d6d; }
.heading { display: block; margin: 17px 0 3px 2px; line-height: 14px; }
.to + .heading { margin-top: 13px; }
.block { display: grid; grid-template-columns: 1fr 111px; gap: 21px; padding-right: 8px; }
.listbox { display: flex; height: 173px; border: 1px solid #82868f; background: #fff; padding: 1px; }
ul { flex: 1; margin: 0; padding: 0; list-style: none; }
li { height: 13px; padding: 0 2px; line-height: 15px; }
li.focused { outline: 1px dotted #000; outline-offset: -1px; }
.lscroll { display: flex; flex-direction: column; justify-content: space-between; align-items: center; width: 16px; padding: 6px 0; background: #f0f0f0; }
.check { display: flex; align-items: center; gap: 3px; margin: 6px 0 10px 5px; height: 14px; }
.check input { appearance: none; width: 13px; height: 13px; border: 1px solid #333; background: #fff; }
.check input:checked::before { content: ""; display: block; width: 9px; height: 4px; margin: 2px 0 0 1px; border: solid #222; border-width: 0 0 1px 1px; transform: rotate(-45deg); }
.method { display: flex; justify-content: space-between; }
.method label { padding: 4px 0 0 2px; }
.combo { display: grid; width: 195px; height: 22px; }
.combo select { grid-area: 1 / 1; appearance: none; width: 100%; padding: 0 3px; border: 1px solid #ababb0; border-radius: 0; background: #fff; }
.drop { grid-area: 1 / 1; justify-self: end; display: grid; place-items: center; width: 18px; border: 1px solid #ababb0; background: #e1e1e1; pointer-events: none; }
.side { display: flex; flex-direction: column; gap: 9px; padding-top: 1px; }
.btn { display: block; width: 111px; height: 26px; border: 1px solid #adadad; background: #e1e1e1; text-align: center; }
.reset { margin-top: 8px; }
.options { margin-top: 20px; }
.info { margin-top: 7px; height: 77px; padding: 4px 0 0 8px; border: 1px solid #dcdcdc; }
.info h2 { margin: 0; font-size: 11px; font-weight: 400; line-height: 14px; }
.info p { margin: 7px 0 0; }
.actions { display: flex; gap: 15px; padding: 10px 15px 0; }
.primary { border: 2px solid #0078d7; }
</style>
